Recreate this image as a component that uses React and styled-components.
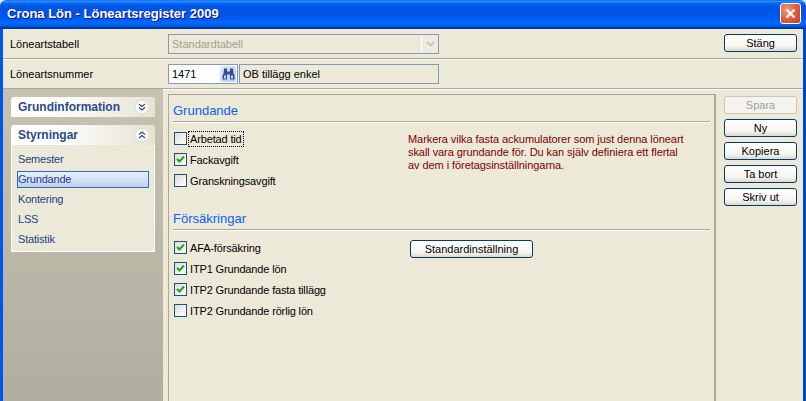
import React from "react";
import styled, { createGlobalStyle } from "styled-components";

const Global = createGlobalStyle`
  html, body { margin: 0; padding: 0; background: #ece9d8; }
  * { box-sizing: border-box; }
`;

const FONT = `"Liberation Sans", Arial, sans-serif`;

const Win = styled.div`
  width: 806px; height: 401px; overflow: hidden;
  display: flex; flex-direction: column;
  font: 11px ${FONT}; color: #000; background: #ece9d8;
`;
const TitleBar = styled.div`
  flex: 0 0 29px; display: flex; align-items: center; justify-content: space-between;
  padding: 0 5px 2px 7px;
  background: linear-gradient(180deg, #0058ee 0%, #3593ff 4%, #288eff 6%, #127dff 8%, #036ffc 10%, #0262ee 14%, #0057e5 20%, #0054e3 24%, #0055eb 56%, #005bf5 66%, #026afe 76%, #0062ef 86%, #0052d6 92%, #0040ab 94%, #003092 100%);
  border-radius: 6px 6px 0 0;
`;
const Title = styled.div`
  color: #fff; font: bold 13px "Liberation Sans", sans-serif;
  text-shadow: 1px 1px 0 #0f1089;
`;
const CloseBtn = styled.div`
  width: 21px; height: 21px; border: 1px solid #fff; border-radius: 3px;
  display: flex; align-items: center; justify-content: center;
  background: radial-gradient(circle at 30% 30%, #ed9a7e 0%, #e0603c 50%, #c8391a 100%);
`;
const Frame = styled.div`
  flex: 1; min-height: 0; display: flex; flex-direction: column;
  border-left: 3px solid #0055ea; border-right: 3px solid #0046d5;
`;
const Row = styled.div`
  flex: 0 0 ${p => p.$h}px; display: flex; align-items: flex-start;
  padding: ${p => p.$pt}px 6px 0 7px;
  border-bottom: 1px solid #aca899;
  box-shadow: 0 1px 0 #fff;
`;
const RowLabel = styled.div`
  width: 158px; line-height: 20px;
`;
const Field = styled.div`
  height: 20px; border: 1px solid #7f9db9; display: flex; align-items: center;
  width: ${p => p.$w}px; margin-right: ${p => p.$mr || 0}px;
  padding-left: 3px; background: ${p => p.$bg || "transparent"};
  color: ${p => p.$c || "#000"};
`;
const Grow = styled.div`flex: 1;`;
const DropArrow = styled.div`
  width: 17px; height: 18px; background: #eeebe0; border-left: 1px solid #fff;
  display: flex; align-items: center; justify-content: center; margin-left: auto;
`;
const SearchBtn = styled.div`
  width: 16px; height: 16px; margin-left: auto; margin-right: 1px; border-radius: 2px;
  background: linear-gradient(135deg, #e3ebfd, #b4c8f6);
  display: flex; align-items: center; justify-content: center;
`;
const Button = styled.div`
  height: 18px; border: 1px solid ${p => p.$off ? "#c9c7ba" : "#003c74"};
  border-radius: 3px; display: flex; align-items: center; justify-content: center;
  color: ${p => p.$off ? "#a1a192" : "#000"};
  background: ${p => p.$off ? "#f4f3ee" : "linear-gradient(180deg, #fff 0%, #f6f5f0 70%, #dcd8cc 100%)"};
  width: ${p => p.$w || 73}px; margin-top: ${p => p.$mt || 0}px;
`;
const Main = styled.div`
  flex: 1; min-height: 0; display: flex;
`;
const Sidebar = styled.div`
  width: 160px; padding: 8px 8px 0 8px;
  background: linear-gradient(180deg, #c6c3b3 0%, #b1ae9f 100%);
  display: flex; flex-direction: column; gap: 8px;
`;
const Card = styled.div`display: flex; flex-direction: column;`;
const CardHead = styled.div`
  height: 20px; border-radius: 3px 3px 0 0; display: flex; align-items: center;
  justify-content: space-between; padding: 0 6px 0 7px;
  background: linear-gradient(90deg, #fff 0%, #fff 30%, #e6e3d2 100%);
  color: #2a4a8c; font-weight: bold; font-size: 12px;
`;
const Chevron = styled.div`
  width: 14px; height: 14px; border-radius: 50%; background: #fff;
  display: flex; align-items: center; justify-content: center; border: 1px solid #e0ddcc;
`;
const CardBody = styled.div`
  height: 107px; background: #ece9d8; border: 1px solid #fff; border-top: 0;
  padding-top: 4px; display: flex; flex-direction: column; align-items: stretch;
`;
const NavItem = styled.div`
  height: 20px; display: flex; align-items: center;
  color: #24428a; letter-spacing: -0.2px;
  span { display: flex; align-items: center; width: 132px; height: 17px; margin-left: 5px; padding-left: 0;
    border: 1px solid ${p => p.$on ? "#316ac5" : "transparent"};
    ${p => p.$on && `background: linear-gradient(180deg, #e8effa, #c1d2ee);`}
  }
`;
const Content = styled.div`
  width: 553px; padding: 5px 0 0 5px;
`;
const Panel = styled.div`
  height: 400px; border: 1px solid #aca899; border-right-width: 2px; padding: 0 4px;
`;
const Heading = styled.div`
  height: 27px; display: flex; align-items: flex-end; padding-bottom: 2px;
  color: #0a60f8; font-size: 13px; line-height: 16px;
  border-bottom: 1px solid #aca899; box-shadow: 0 1px 0 #fff;
`;
const Group = styled.div`
  display: flex; height: ${p => p.$h}px; padding-top: ${p => p.$pt}px;
`;
const Checks = styled.div`
  width: 237px; display: flex; flex-direction: column; gap: 8px; padding-left: 1px;
`;
const Check = styled.div`display: flex; align-items: center; height: 13px; gap: 2px;`;
const Box = styled.div`
  width: 13px; height: 13px; border: 1px solid #1c5180; display: flex; align-items: center; justify-content: center;
  background: linear-gradient(135deg, #dcdcd7, #fff);
`;
const CheckLabel = styled.span`
  padding: 1px 1px 0; line-height: 13px; outline: ${p => p.$focus ? "1px dotted #000" : "none"};
  white-space: nowrap; letter-spacing: -0.15px;
`;
const Message = styled.div`
  margin-left: -2px; padding-top: 1px; color: #800000; line-height: 13px; width: 300px; white-space: nowrap;
  letter-spacing: -0.07px;
`;
const SideBtns = styled.div`
  flex: 1; display: flex; flex-direction: column; gap: 5px; padding: 7px 0 0 8px;
`;

const Tick = () => (
  <svg width="9" height="9" viewBox="0 0 9 9"><path d="M1 4l2.5 2.5L8 1.5" fill="none" stroke="#21a121" strokeWidth="2" /></svg>
);
const C = ({ on, focus, children }) => (
  <Check><Box>{on && <Tick />}</Box><CheckLabel $focus={focus}>{children}</CheckLabel></Check>
);
const Chev = ({ up }) => (
  <svg width="8" height="8" viewBox="0 0 8 8" fill="none" stroke="#2a4a8c" strokeWidth="1.3" style={{ transform: up ? "scaleY(-1)" : "none" }}>
    <path d="M1 1l3 2.5L7 1M1 4.5l3 2.5 3-2.5" />
  </svg>
);
const Binoculars = () => (
  <svg width="13" height="12" viewBox="0 0 13 12">
    <path d="M2 0.5h3v3h3v-3h3l0.5 5 1 2v4H8v-5H5v5H0.5v-4l1-2z" fill="#34508f" />
    <rect x="2" y="7.5" width="2" height="3" fill="#c4d2f2" />
    <rect x="9" y="7.5" width="2" height="3" fill="#c4d2f2" />
  </svg>
);

export default function App() {
  return (
    <>
      <Global />
      <Win>
        <TitleBar>
          <Title>Crona Lön - Löneartsregister 2009</Title>
          <CloseBtn>
            <svg width="11" height="11" viewBox="0 0 11 11"><path d="M1.5 1.5l8 8M9.5 1.5l-8 8" stroke="#fff" strokeWidth="2.2" /></svg>
          </CloseBtn>
        </TitleBar>
        <Frame>
          <Row $h={30} $pt={5}>
            <RowLabel>Löneartstabell</RowLabel>
            <Field $w={271} $c="#a1a192">
              Standardtabell
              <DropArrow>
                <svg width="9" height="7" viewBox="0 0 9 7"><path d="M1 1l3.5 3.5L8 1" fill="none" stroke="#c9c7ba" strokeWidth="2" /></svg>
              </DropArrow>
            </Field>
            <Grow />
            <Button>Stäng</Button>
          </Row>
          <Row $h={30} $pt={5}>
            <RowLabel>Löneartsnummer</RowLabel>
            <Field $w={70} $mr={1} $bg="#fff">
              1471
              <SearchBtn><Binoculars /></SearchBtn>
            </Field>
            <Field $w={200}>OB tillägg enkel</Field>
          </Row>
          <Main>
            <Sidebar>
              <Card>
                <CardHead>Grundinformation<Chevron><Chev /></Chevron></CardHead>
              </Card>
              <Card>
                <CardHead>Styrningar<Chevron><Chev up /></Chevron></CardHead>
                <CardBody>
                  <NavItem><span>Semester</span></NavItem>
                  <NavItem $on><span>Grundande</span></NavItem>
                  <NavItem><span>Kontering</span></NavItem>
                  <NavItem><span>LSS</span></NavItem>
                  <NavItem><span>Statistik</span></NavItem>
                </CardBody>
              </Card>
            </Sidebar>
            <Content>
              <Panel>
                <Heading>Grundande</Heading>
                <Group $h={81} $pt={10}>
                  <Checks>
                    <C focus>Arbetad tid</C>
                    <C on>Fackavgift</C>
                    <C>Granskningsavgift</C>
                  </Checks>
                  <Message>
                    Markera vilka fasta ackumulatorer som just denna löneart<br />
                    skall vara grundande för. Du kan själv definiera ett flertal<br />
                    av dem i företagsinställningarna.
                  </Message>
                </Group>
                <Heading>Försäkringar</Heading>
                <Group $h={100} $pt={11}>
                  <Checks>
                    <C on>AFA-försäkring</C>
                    <C on>ITP1 Grundande lön</C>
                    <C on>ITP2 Grundande fasta tillägg</C>
                    <C>ITP2 Grundande rörlig lön</C>
                  </Checks>
                  <Button $w={123} $mt={-1}>Standardinställning</Button>
                </Group>
              </Panel>
            </Content>
            <SideBtns>
              <Button $off>Spara</Button>
              <Button>Ny</Button>
              <Button>Kopiera</Button>
              <Button>Ta bort</Button>
              <Button>Skriv ut</Button>
            </SideBtns>
          </Main>
        </Frame>
      </Win>
    </>
  );
}
